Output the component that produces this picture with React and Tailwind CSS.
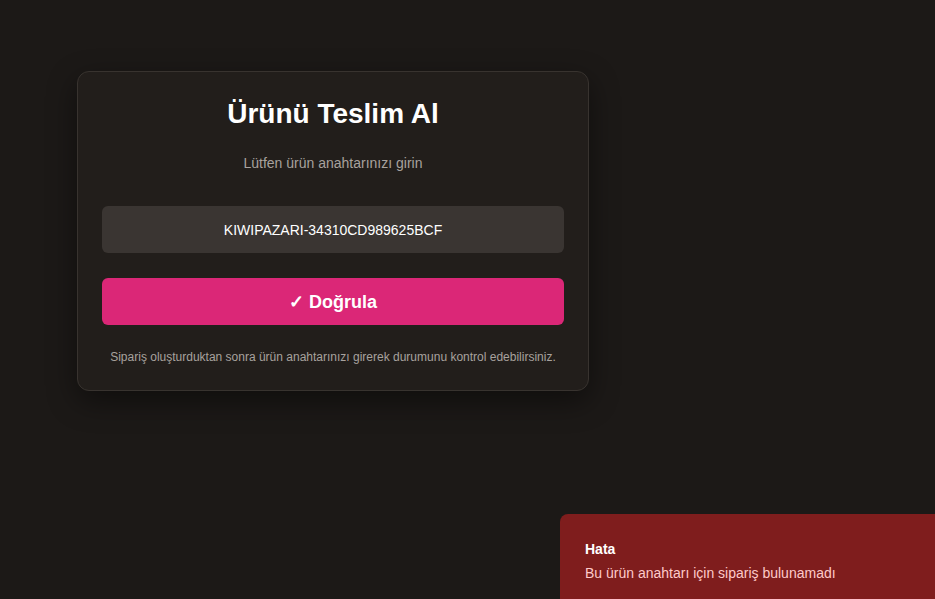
export default function App() {
  return (
    <div
      className="min-h-screen w-full bg-[#1c1917] pt-[71px] pl-[77px]"
      style={{ fontFamily: '"Liberation Sans", Arial, sans-serif' }}
    >
      <div className="w-[512px] rounded-xl border border-[#38332f] bg-[#221e1b] px-6 pt-6 pb-[25px] shadow-[0_10px_30px_rgba(0,0,0,0.45)]">
        <h1 className="text-center text-[28px] leading-9 font-bold text-white">Ürünü Teslim Al</h1>
        <p className="mt-[21px] text-center text-sm leading-5 text-[#a8a29e]">Lütfen ürün anahtarınızı girin</p>
        <div className="mt-[33px] flex h-[47px] items-center justify-center rounded-md bg-[#3a3532] text-sm text-white">
          KIWIPAZARI-34310CD989625BCF
        </div>
        <button className="mt-[25px] flex h-[47px] w-full items-center justify-center rounded-md bg-[#db2777] text-lg font-bold text-white">
          ✓ Doğrula
        </button>
        <p className="mt-[24px] text-center text-xs leading-4 text-[#a8a29e]">
          Sipariş oluşturduktan sonra ürün anahtarınızı girerek durumunu kontrol edebilirsiniz.
        </p>
      </div>
      <div className="fixed right-0 bottom-0 h-[85px] w-[375px] rounded-tl-lg bg-[#7f1d1d] pt-[25px] pl-[25px]">
        <div className="text-sm leading-5 font-bold text-white">Hata</div>
        <div className="mt-[4px] text-sm leading-5 text-[#fecaca]">Bu ürün anahtarı için sipariş bulunamadı</div>
      </div>
    </div>
  );
}
